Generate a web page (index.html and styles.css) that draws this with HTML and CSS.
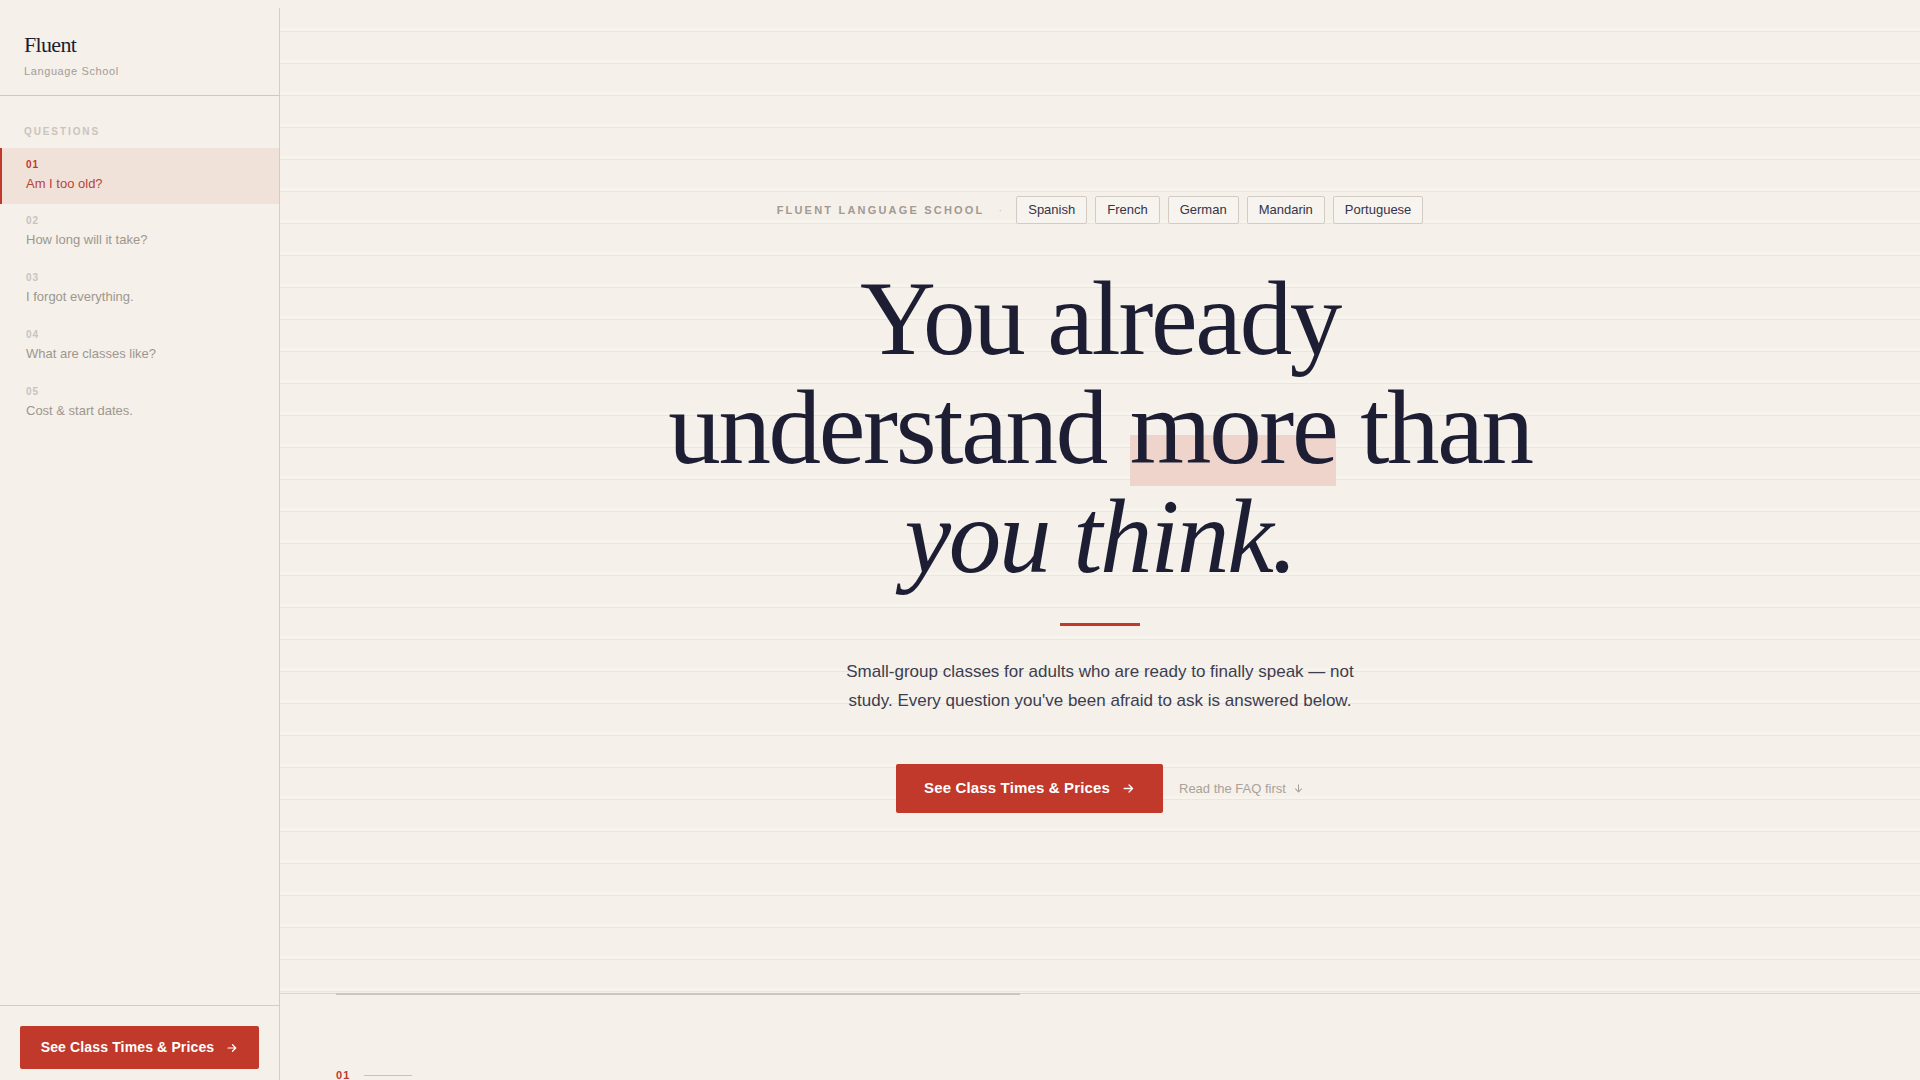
FILE: index.html
```html
<!DOCTYPE html>
<html lang="en">
<head>
<meta charset="utf-8">
<title>Fluent Language School</title>
<link rel="stylesheet" href="styles.css">
</head>
<body>
<div class="app">
  <aside class="sidebar">
    <div class="brand">
      <div class="brand-name">Fluent</div>
      <div class="brand-sub">Language School</div>
    </div>
    <nav class="qnav">
      <div class="qnav-label">QUESTIONS</div>
      <a class="qitem active" href="#q1"><span class="qnum">01</span><span class="qtext">Am I too old?</span></a>
      <a class="qitem" href="#q2"><span class="qnum">02</span><span class="qtext">How long will it take?</span></a>
      <a class="qitem" href="#q3"><span class="qnum">03</span><span class="qtext">I forgot everything.</span></a>
      <a class="qitem" href="#q4"><span class="qnum">04</span><span class="qtext">What are classes like?</span></a>
      <a class="qitem" href="#q5"><span class="qnum">05</span><span class="qtext">Cost &amp; start dates.</span></a>
    </nav>
    <div class="side-foot">
      <a class="btn btn-side" href="#prices">See Class Times &amp; Prices
        <svg class="arrow" viewBox="0 0 24 24" width="12" height="12"><path d="M4 12h15M13 5.5l6.5 6.5-6.5 6.5"/></svg>
      </a>
    </div>
  </aside>

  <main class="main">
    <section class="hero">
      <div class="tagrow">
        <span class="tag-label">FLUENT LANGUAGE SCHOOL</span>
        <span class="tag-dot">·</span>
        <div class="langs">
          <span class="lang">Spanish</span>
          <span class="lang">French</span>
          <span class="lang">German</span>
          <span class="lang">Mandarin</span>
          <span class="lang">Portuguese</span>
        </div>
      </div>
      <h1 class="headline">You already<br>understand <span class="mark">more</span> than<br><em>you think.</em></h1>
      <div class="rule"></div>
      <p class="lede">Small-group classes for adults who are ready to finally speak — not study. Every question you've been afraid to ask is answered below.</p>
      <div class="actions">
        <a class="btn btn-main" href="#prices">See Class Times &amp; Prices
          <svg class="arrow" viewBox="0 0 24 24" width="13" height="13"><path d="M4 12h15M13 5.5l6.5 6.5-6.5 6.5"/></svg>
        </a>
        <a class="faq-link" href="#q1">Read the FAQ first
          <svg class="down" viewBox="0 0 24 24" width="11" height="11"><path d="M12 4v15M5.5 13l6.5 6.5 6.5-6.5"/></svg>
        </a>
      </div>
    </section>

    <section class="faq" id="q1">
      <div class="faq-bar"></div>
      <div class="eyebrow"><span class="eyebrow-num">01</span><span class="eyebrow-line"></span></div>
    </section>
  </main>
</div>
</body>
</html>
```

FILE: styles.css
```css
* { box-sizing: border-box; }

html, body {
  margin: 0;
  padding: 0;
  background: #f5f0e9;
}

body {
  font-family: "Liberation Sans", Arial, sans-serif;
  color: #1d1e33;
  overflow: hidden;
  height: 1080px;
}

a { text-decoration: none; color: inherit; }

.app {
  display: flex;
  align-items: flex-start;
}

/* Sidebar */
.sidebar {
  width: 280px;
  flex-shrink: 0;
  height: 1080px;
  margin-top: 8px;
  border-right: 1px solid #d3cdc5;
  display: flex;
  flex-direction: column;
  background: #f5f0e9;
}

.brand {
  padding: 24px 24px 16px;
  border-bottom: 1px solid #cfc9c1;
}

.brand-name {
  font-family: "Liberation Serif", "Times New Roman", serif;
  font-size: 22px;
  line-height: 26px;
  letter-spacing: -0.03em;
  color: #1d1e33;
}

.brand-sub {
  margin-top: 5px;
  font-size: 11px;
  line-height: 16px;
  letter-spacing: 0.055em;
  color: #a39d96;
}

.qnav {
  flex: 1;
  padding-top: 29px;
  display: flex;
  flex-direction: column;
}

.qnav-label {
  padding-left: 24px;
  margin-bottom: 9px;
  font-size: 10px;
  line-height: 14px;
  font-weight: 700;
  letter-spacing: 0.19em;
  color: #c9c4bd;
}

.qitem {
  display: flex;
  flex-direction: column;
  gap: 3px;
  padding: 10px 24px 12px 24px;
  border-left: 2px solid transparent;
}

.qnum {
  font-size: 10px;
  line-height: 14px;
  font-weight: 700;
  letter-spacing: 0.1em;
  color: #c9c4bd;
}

.qtext {
  font-size: 13px;
  line-height: 18px;
  color: #9d978f;
}

.qitem.active {
  background: #f0e1d9;
  border-left-color: #c0392b;
  padding-bottom: 11px;
}

.qitem.active .qnum { color: #c0392b; }
.qitem.active .qtext { color: #b8433a; }

.side-foot {
  border-top: 1px solid #d3cdc5;
  padding: 20px 20px 19px;
}

/* Buttons */
.btn {
  display: inline-flex;
  align-items: center;
  justify-content: center;
  gap: 12px;
  background: #c0392b;
  color: #fff;
  font-weight: 700;
  border-radius: 2px;
  letter-spacing: 0.01em;
}

.btn .arrow {
  fill: none;
  stroke: #fff;
  stroke-width: 2.4;
  stroke-linecap: round;
  stroke-linejoin: round;
}

.btn-side {
  display: flex;
  width: 100%;
  font-size: 14px;
  line-height: 17px;
  padding: 13px 0;
}

.btn-main {
  font-size: 15px;
  line-height: 18px;
  padding: 15px 28px 16px;
}

/* Main */
.main {
  flex: 1;
  min-width: 0;
}

.hero {
  height: 994px;
  border-bottom: 1px solid #dcd6ce;
  padding-top: 16px;
  display: flex;
  flex-direction: column;
  align-items: center;
  justify-content: center;
  background-image: repeating-linear-gradient(
    to bottom,
    transparent 0,
    transparent 28px,
    rgba(255, 255, 255, 0.2) 28px,
    rgba(255, 255, 255, 0.2) 31px,
    #ebe5dd 31px,
    #ebe5dd 32px
  );
}

.tagrow {
  display: flex;
  align-items: center;
  height: 28px;
}

.tag-label {
  font-size: 11px;
  font-weight: 700;
  letter-spacing: 0.2em;
  color: #a09a93;
}

.tag-dot {
  margin: 0 14px;
  font-size: 11px;
  color: #c4bfb8;
}

.langs {
  display: flex;
  gap: 8px;
}

.lang {
  border: 1px solid #d2ccc4;
  background: #f7f3ee;
  border-radius: 2px;
  padding: 5px 11px;
  font-size: 13px;
  line-height: 16px;
  color: #33344a;
}

.headline {
  margin: 40px 0 0;
  font-family: "Liberation Serif", "Times New Roman", serif;
  font-weight: 400;
  font-size: 105px;
  line-height: 109px;
  letter-spacing: -0.022em;
  text-align: center;
  color: #1d1e33;
}

.headline em {
  font-style: italic;
}

.mark {
  background: linear-gradient(to bottom, transparent 56%, #eed4ca 56%);
}

.rule {
  width: 80px;
  height: 3px;
  background: #c0392b;
  margin-top: 32px;
}

.lede {
  margin: 31px 0 0;
  width: 530px;
  text-align: center;
  font-size: 17px;
  line-height: 29px;
  color: #3c3d50;
}

.actions {
  margin-top: 49px;
  display: flex;
  align-items: center;
  gap: 16px;
}

.faq-link {
  display: inline-flex;
  align-items: center;
  gap: 7px;
  font-size: 13px;
  color: #a8a29b;
}

.faq-link .down {
  fill: none;
  stroke: #a8a29b;
  stroke-width: 2.2;
  stroke-linecap: round;
  stroke-linejoin: round;
}

/* FAQ section */
.faq {
  padding: 0 56px;
}

.faq-bar {
  width: 684px;
  height: 2px;
  margin-top: -1px;
  background: #cbc5bd;
}

.eyebrow {
  margin-top: 73px;
  display: flex;
  align-items: center;
  gap: 14px;
}

.eyebrow-num {
  font-size: 11px;
  line-height: 14px;
  font-weight: 700;
  letter-spacing: 0.1em;
  color: #c0392b;
}

.eyebrow-line {
  width: 48px;
  height: 1px;
  background: #c9c3bb;
}
```
